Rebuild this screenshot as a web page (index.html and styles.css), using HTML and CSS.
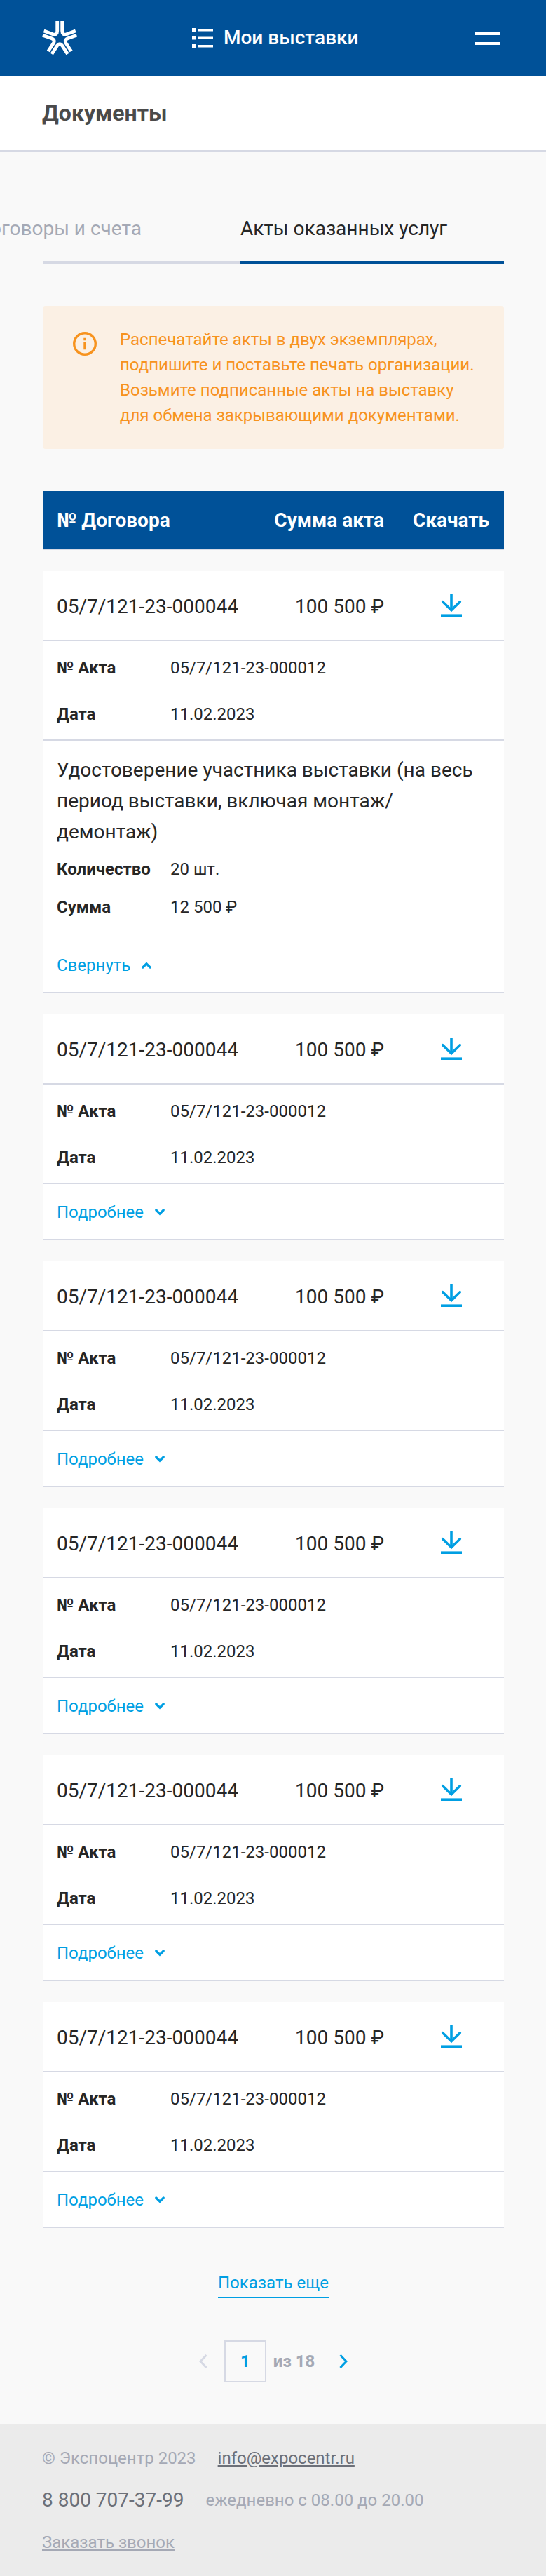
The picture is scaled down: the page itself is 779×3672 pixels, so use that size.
FILE: index.html
```html
<!DOCTYPE html>
<html lang="ru">
<head>
<meta charset="UTF-8">
<meta name="viewport" content="width=device-width, initial-scale=1.0">
<title>Документы</title>
<link rel="stylesheet" href="styles.css">
</head>
<body>

<!-- shared icons -->
<svg class="sprite" width="0" height="0">
    <symbol id="download" viewBox="0 0 30 32">
        <path d="M15 0v23" fill="none" stroke="currentColor" stroke-width="3.6"/>
        <path d="M2.700 10.700L15 22.800l12.300-12.100" fill="none" stroke="currentColor" stroke-width="3.600" stroke-linecap="round"/>
        <path d="M0 28.400h30V32H0z" fill="currentColor"/>
    </symbol>
    <symbol id="chevron" viewBox="0 0 14 10">
        <path d="M1.800 2L7 7.200 12.200 2" fill="none" stroke="currentColor" stroke-width="3.200" stroke-linecap="round"/>
    </symbol>
</svg>

<header class="header">
    <a href="#" class="logo">
        <svg width="50" height="48" viewBox="0 0 50 48">
            <g fill="none" stroke="#fff" stroke-width="4.800">
                <path d="M21.700 0V14Q21.700 20.500 15.500 18.800L2.600 13.900"/>
                <path d="M28.700 0V14Q28.700 20.500 34.900 18.800L47.800 13.900"/>
                <path d="M0.800 20.200L13 24.400Q19.500 26.600 16 32L8.800 43"/>
                <path d="M49.400 20.200L37.400 24.400Q30.900 26.600 34.400 32L41.600 43"/>
                <path d="M13.900 47L21.700 35Q25.200 30.500 28.700 35L36.500 47"/>
            </g>
        </svg>
    </a>
    <a href="#" class="my-expo">
        <svg width="30" height="28" viewBox="0 0 30 28" fill="#fff">
            <path d="M0 0h5v5H0zM8 1h22v3.500H8zM0 11.500h5v5H0zM8 12.500h22v3.500H8zM0 23h5v5H0zM8 24h22v3.500H8z"/>
        </svg>
        <span>Мои выставки</span>
    </a>
    <button class="burger"><span></span><span></span></button>
</header>

<div class="title-bar">
    <h1>Документы</h1>
</div>

<main class="content">
    <nav class="tabs">
        <a href="#" class="tab"><span>Договоры и счета</span></a>
        <a href="#" class="tab active">Акты оказанных услуг</a>
    </nav>

    <div class="notice">
        <svg width="34" height="34" viewBox="0 0 34 34">
            <circle cx="17" cy="17" r="15.300" fill="none" stroke="#f7931e" stroke-width="3.400"/>
            <path d="M15.300 8.800h3.400v3.400h-3.400zM15.300 14.700h3.400v10.600h-3.400z" fill="#f7931e"/>
        </svg>
        <p>Распечатайте акты в двух экземплярах,<br>подпишите и поставьте печать организации.<br>Возьмите подписанные акты на выставку<br>для обмена закрывающими документами.</p>
    </div>

    <div class="table-head">
        <span>№ Договора</span>
        <span class="sum">Сумма акта</span>
        <span class="load">Скачать</span>
    </div>

    <section class="card">
        <div class="card-top">
            <span>05/7/121-23-000044</span>
            <span class="sum">100 500 ₽</span>
            <a href="#" class="load"><svg width="30" height="32"><use href="#download"/></svg></a>
        </div>
        <dl class="card-info">
            <dt>№ Акта</dt><dd>05/7/121-23-000012</dd>
            <dt>Дата</dt><dd>11.02.2023</dd>
        </dl>
        <div class="card-details">
            <p>Удостоверение участника выставки (на весь период выставки, включая монтаж/демонтаж)</p>
            <dl>
                <dt>Количество</dt><dd>20 шт.</dd>
                <dt>Сумма</dt><dd>12 500 ₽</dd>
            </dl>
        </div>
        <a href="#" class="toggle open">Свернуть <svg width="14" height="10"><use href="#chevron"/></svg></a>
    </section>

    <section class="card">
        <div class="card-top">
            <span>05/7/121-23-000044</span>
            <span class="sum">100 500 ₽</span>
            <a href="#" class="load"><svg width="30" height="32"><use href="#download"/></svg></a>
        </div>
        <dl class="card-info">
            <dt>№ Акта</dt><dd>05/7/121-23-000012</dd>
            <dt>Дата</dt><dd>11.02.2023</dd>
        </dl>
        <a href="#" class="toggle">Подробнее <svg width="14" height="10"><use href="#chevron"/></svg></a>
    </section>

    <section class="card">
        <div class="card-top">
            <span>05/7/121-23-000044</span>
            <span class="sum">100 500 ₽</span>
            <a href="#" class="load"><svg width="30" height="32"><use href="#download"/></svg></a>
        </div>
        <dl class="card-info">
            <dt>№ Акта</dt><dd>05/7/121-23-000012</dd>
            <dt>Дата</dt><dd>11.02.2023</dd>
        </dl>
        <a href="#" class="toggle">Подробнее <svg width="14" height="10"><use href="#chevron"/></svg></a>
    </section>

    <section class="card">
        <div class="card-top">
            <span>05/7/121-23-000044</span>
            <span class="sum">100 500 ₽</span>
            <a href="#" class="load"><svg width="30" height="32"><use href="#download"/></svg></a>
        </div>
        <dl class="card-info">
            <dt>№ Акта</dt><dd>05/7/121-23-000012</dd>
            <dt>Дата</dt><dd>11.02.2023</dd>
        </dl>
        <a href="#" class="toggle">Подробнее <svg width="14" height="10"><use href="#chevron"/></svg></a>
    </section>

    <section class="card">
        <div class="card-top">
            <span>05/7/121-23-000044</span>
            <span class="sum">100 500 ₽</span>
            <a href="#" class="load"><svg width="30" height="32"><use href="#download"/></svg></a>
        </div>
        <dl class="card-info">
            <dt>№ Акта</dt><dd>05/7/121-23-000012</dd>
            <dt>Дата</dt><dd>11.02.2023</dd>
        </dl>
        <a href="#" class="toggle">Подробнее <svg width="14" height="10"><use href="#chevron"/></svg></a>
    </section>

    <section class="card">
        <div class="card-top">
            <span>05/7/121-23-000044</span>
            <span class="sum">100 500 ₽</span>
            <a href="#" class="load"><svg width="30" height="32"><use href="#download"/></svg></a>
        </div>
        <dl class="card-info">
            <dt>№ Акта</dt><dd>05/7/121-23-000012</dd>
            <dt>Дата</dt><dd>11.02.2023</dd>
        </dl>
        <a href="#" class="toggle">Подробнее <svg width="14" height="10"><use href="#chevron"/></svg></a>
    </section>

    <a href="#" class="show-more">Показать еще</a>

    <div class="pager">
        <a href="#" class="prev"><svg width="12" height="20" viewBox="0 0 12 20"><path d="M10.500 1L2 10l8.500 9" fill="none" stroke="currentColor" stroke-width="3"/></svg></a>
        <span class="page">1</span>
        <span class="total">из 18</span>
        <a href="#" class="next"><svg width="12" height="20" viewBox="0 0 12 20"><path d="M1.500 1L10 10l-8.500 9" fill="none" stroke="currentColor" stroke-width="3"/></svg></a>
    </div>
</main>

<footer class="footer">
    <div class="footer-row">
        <span>© Экспоцентр 2023</span>
        <a href="#" class="mail">info@expocentr.ru</a>
    </div>
    <div class="footer-row">
        <a href="#" class="phone">8 800 707-37-99</a>
        <span>ежедневно с 08.00 до 20.00</span>
    </div>
    <div class="footer-row">
        <a href="#" class="callback">Заказать звонок</a>
    </div>
</footer>

</body>
</html>
```
FILE: styles.css
```css
* {
    box-sizing: border-box;
}
body {
    margin: 0;
    font-family: Roboto, "Liberation Sans", sans-serif;
    font-size: 24px;
    line-height: 36px;
    color: #262626;
    background-color: #f9f9f9;
    overflow-x: hidden;
}
a {
    color: #009fe3;
    text-decoration: none;
}
svg {
    display: block;
    flex-shrink: 0;
}
p, h1, dl, dd {
    margin: 0;
}
.sprite {
    position: absolute;
}
.header {
    display: flex;
    align-items: center;
    height: 108px;
    padding: 0 65px 0 60px;
    background-color: #005198;
}
.my-expo {
    display: flex;
    align-items: center;
    gap: 15px;
    margin-left: 164px;
    font-size: 28px;
    font-weight: 500;
    color: #fff;
}
.burger {
    display: flex;
    flex-direction: column;
    gap: 10px;
    width: 36px;
    margin-left: auto;
    padding: 2px 0 0;
    border: none;
    background: none;
}
.burger span {
    height: 4px;
    width: 36px;
    background-color: #fff;
}
.title-bar {
    height: 108px;
    padding: 31px 60px;
    background-color: #fff;
    border-bottom: 2px solid #d6d9e4;
}
h1 {
    font-size: 32px;
    line-height: 44px;
    font-weight: 700;
    color: #4a4a4a;
}
.content {
    padding: 86px 60px 0 61px;
}
.tabs {
    display: flex;
    height: 74px;
    font-size: 28px;
    line-height: 48px;
}
.tab {
    width: 282px;
    border-bottom: 4px solid #d6d9e4;
    color: #a5a9b5;
}
.tab:first-child {
    display: flex;
    justify-content: flex-end;
    padding-right: 141px;
    white-space: nowrap;
}
.tab.active {
    width: 376px;
    border-color: #005198;
    color: #262626;
}
.notice {
    display: flex;
    gap: 33px;
    height: 204px;
    margin-top: 60px;
    padding: 30px 43px;
    border-radius: 4px;
    background-color: #fbf0e4;
    color: #f7931e;
}
.notice svg {
    margin-top: 7px;
}
.notice p {
    white-space: nowrap;
}
.table-head,
.card-top {
    display: grid;
    grid-template-columns: 1fr 200px 151px;
    align-items: center;
    padding-left: 20px;
    font-size: 28px;
    border-bottom: 2px solid #d6d9e4;
}
.table-head {
    height: 84px;
    margin-top: 60px;
    padding-top: 2px;
    background-color: #005198;
    color: #fff;
    font-weight: 700;
}
.sum {
    padding-right: 20px;
    text-align: right;
    white-space: nowrap;
}
.load {
    display: flex;
    justify-content: center;
}
.load svg {
    margin: 0 0 3px 1px;
}
.card {
    margin-top: 30px;
    background-color: #fff;
    border-bottom: 2px solid #d6d9e4;
}
.card-top {
    height: 100px;
    padding-top: 3px;
}
.card dl {
    display: grid;
    grid-template-columns: 162px 1fr;
}
.card dt {
    font-weight: 700;
}
.card-info {
    gap: 30px 0;
    height: 142px;
    padding: 20px 20px 18px;
    border-bottom: 2px solid #d6d9e4;
}
.card-details {
    padding: 20px 20px 0;
}
.card-details p {
    font-size: 28px;
    line-height: 44px;
}
.card-details dl {
    gap: 18px 0;
    margin-top: 13px;
}
.toggle {
    display: flex;
    align-items: center;
    gap: 16px;
    height: 78px;
    padding: 2px 0 0 20px;
}
.toggle.open {
    height: 103px;
    padding-top: 26px;
}
.toggle.open svg {
    transform: rotate(180deg);
}
.show-more {
    display: block;
    width: 158px;
    height: 40px;
    margin: 60px auto 0;
    white-space: nowrap;
    border-bottom: 2px solid #009fe3;
}
.pager {
    display: flex;
    align-items: center;
    justify-content: center;
    margin-top: 60px;
    font-weight: 700;
}
.prev {
    color: #d6d9e4;
}
.page {
    width: 60px;
    height: 60px;
    margin: 0 10px 0 24px;
    border: 2px solid #d6d9e4;
    line-height: 56px;
    text-align: center;
    color: #009fe3;
}
.total {
    margin-right: 35px;
    color: #a5a9b5;
}
.footer {
    height: 216px;
    margin-top: 60px;
    padding: 18px 60px;
    background-color: #ebebeb;
    color: #a5a9b5;
}
.footer-row {
    display: flex;
    gap: 31px;
    height: 60px;
    align-items: center;
}
.mail,
.phone {
    color: #6c7079;
}
.mail,
.callback {
    text-decoration: underline;
}
.phone {
    font-size: 28px;
}
.callback {
    color: #a5a9b5;
}
```
